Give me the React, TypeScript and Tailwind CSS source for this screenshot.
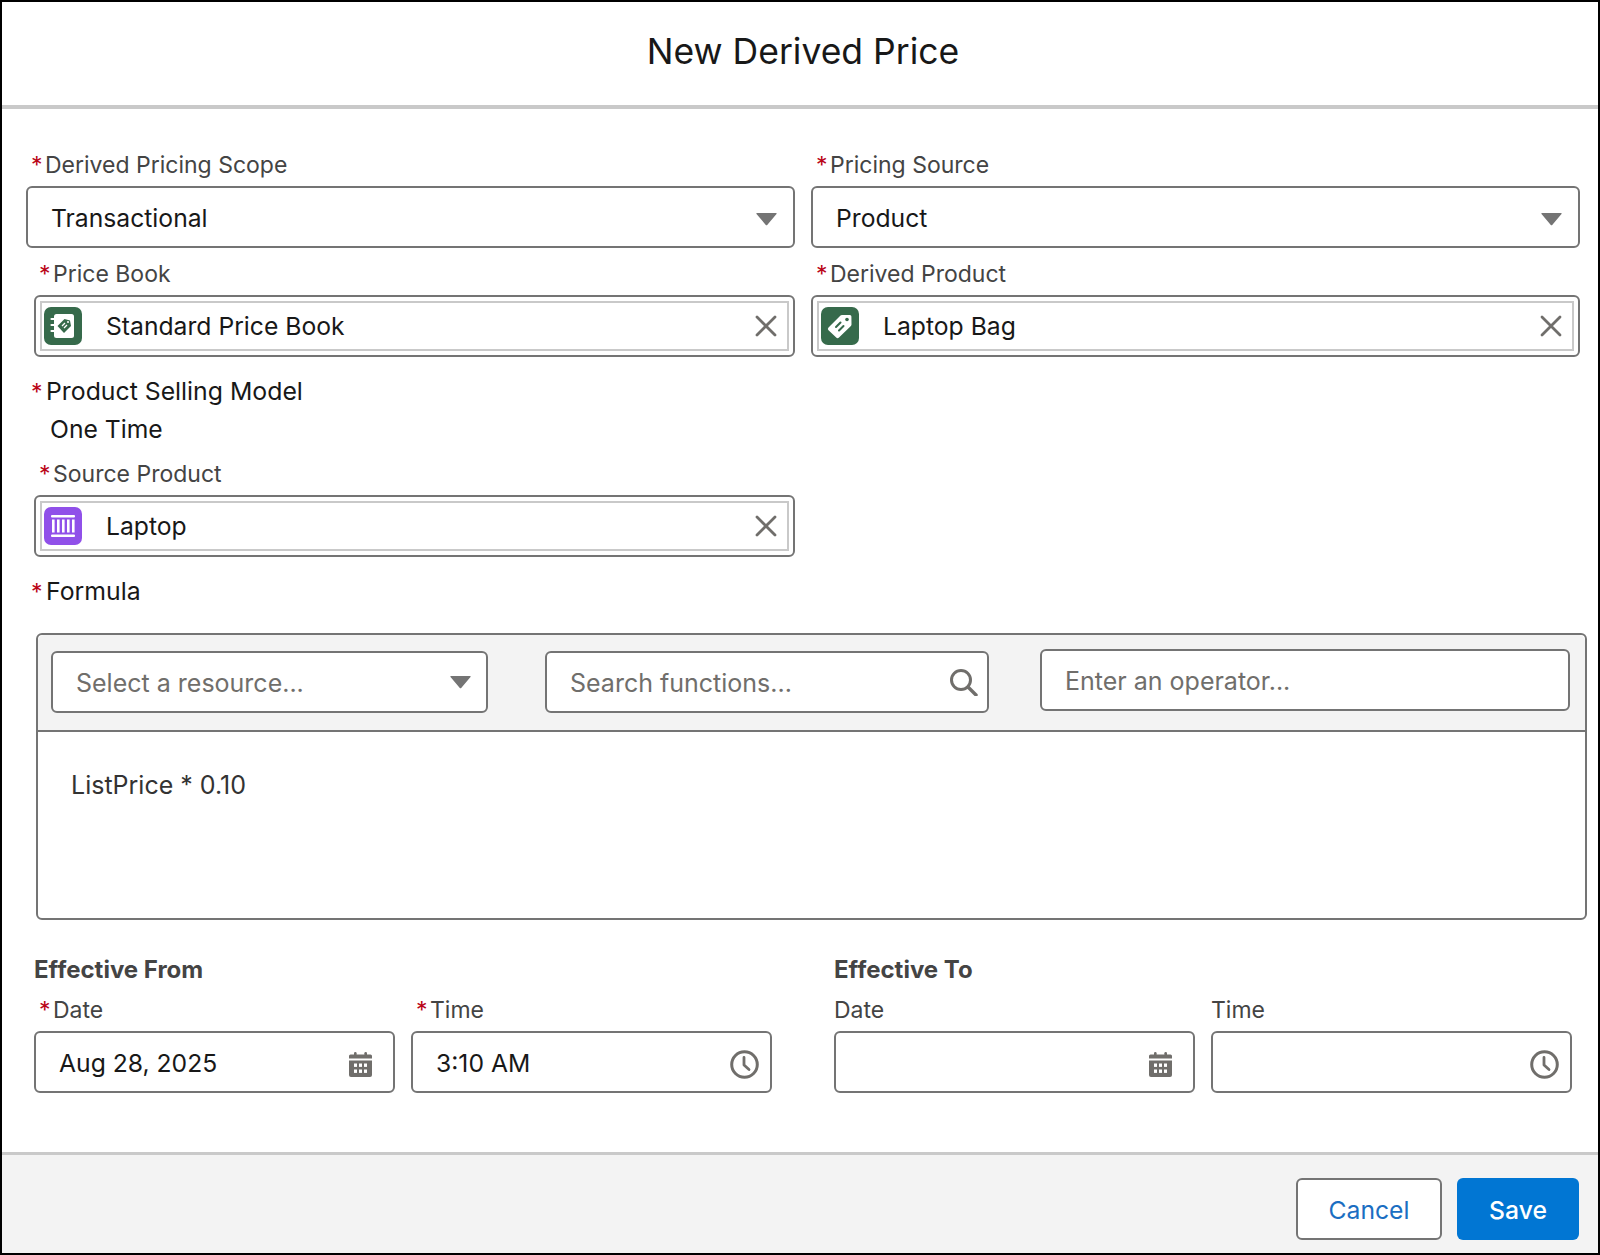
import { ReactNode } from "react";

const Caret = ({ className = "" }: { className?: string }) => (
  <svg width="21" height="14" viewBox="0 0 21 14" className={`shrink-0 ${className}`}>
    <path d="M1 1h19a.6.6 0 0 1 .5 1l-9.3 11a1 1 0 0 1-1.4 0L.5 2A.6.6 0 0 1 1 1z" fill="#747474" />
  </svg>
);

const Close = () => (
  <svg width="22" height="22" viewBox="0 0 22 22" className="shrink-0">
    <path d="M2 2l18 18M20 2L2 20" stroke="#706e6b" strokeWidth="2.8" strokeLinecap="round" />
  </svg>
);

const SearchIcon = () => (
  <svg width="29" height="28" viewBox="0 0 29 28" fill="none" className="shrink-0">
    <circle cx="12" cy="12" r="9.5" stroke="#706e6b" strokeWidth="3" />
    <path d="M19 19l8 8" stroke="#706e6b" strokeWidth="3.4" strokeLinecap="round" />
  </svg>
);

const CalendarIcon = () => (
  <svg width="23" height="25" viewBox="0 0 23 25" className="mr-[10px] shrink-0">
    <rect x="5" y="0" width="2.6" height="5" rx="1.2" fill="#706e6b" />
    <rect x="15.4" y="0" width="2.6" height="5" rx="1.2" fill="#706e6b" />
    <path d="M1.5 2.5h20a1.500 1.500 0 0 1 1.500 1.500v2.500H0V4a1.5 1.5 0 0 1 1.5-1.5z" fill="#706e6b" />
    <path d="M0 8.5h23V23a2 2 0 0 1-2 2H2a2 2 0 0 1-2-2z" fill="#706e6b" />
    {[5, 10, 15].map((x) =>
      [11.5, 17.5].map((y) => <rect key={`${x}-${y}`} x={x} y={y} width="3" height="3.4" fill="#fff" />)
    )}
  </svg>
);

const ClockIcon = () => (
  <svg width="29" height="29" viewBox="0 0 29 29" fill="none" className="shrink-0">
    <circle cx="14.5" cy="14.5" r="12.8" stroke="#706e6b" strokeWidth="3" />
    <path d="M14 7.5v7.5l5 4.5" stroke="#706e6b" strokeWidth="2.8" strokeLinecap="round" strokeLinejoin="round" />
  </svg>
);

const BookGlyph = () => (
  <svg width="38" height="38" viewBox="0 0 38 38">
    <rect width="38" height="38" rx="7" fill="#366a4b" />
    <rect x="10" y="7" width="20" height="24" rx="2.5" fill="#fff" />
    {[12, 18, 24].map((y) => (
      <path key={y} d="M7.500 0h3" transform={`translate(0 ${y})`} stroke="#fff" strokeWidth="2.2" strokeLinecap="round" />
    ))}
    <path d="M13.5 19l7-7 5.5 1.500 1 5.500-7 7z" fill="#366a4b" />
    <circle cx="24" cy="15" r="1" fill="#fff" />
    <path d="M18 19l3-3M20 21l3-3" stroke="#fff" strokeWidth="1.3" />
  </svg>
);

const TagGlyph = () => (
  <svg width="38" height="38" viewBox="0 0 38 38">
    <rect width="38" height="38" rx="7" fill="#366a4b" />
    <path d="M7.500 20.500L19.500 8.500a2 2 0 0 1 1.400-.6l8 .1a1.500 1.500 0 0 1 1.500 1.500l.1 8a2 2 0 0 1-.6 1.400L18 30.500a2 2 0 0 1-2.800 0l-7.700-7.200a2 2 0 0 1 0-2.800z" fill="#fff" />
    <circle cx="26" cy="12.500" r="1.800" fill="#366a4b" />
    <path d="M14.500 18.500l4.500 4.500M18 15.500l4.500 4.500" transform="rotate(90 18.500 19.500)" stroke="#366a4b" strokeWidth="2" strokeLinecap="round" />
  </svg>
);

const ProductGlyph = () => (
  <svg width="38" height="38" viewBox="0 0 38 38">
    <rect width="38" height="38" rx="7" fill="#9050e9" />
    <rect x="7" y="8" width="24" height="2.600" rx="1" fill="#fff" />
    <rect x="7" y="27.400" width="24" height="2.600" rx="1" fill="#fff" />
    {[8, 13, 18, 23, 28].map((x) => (
      <rect key={x} x={x} y="12.500" width="2.600" height="13" fill="#fff" />
    ))}
  </svg>
);

const Label = ({ text, required, className = "" }: { text: string; required?: boolean; className?: string }) => (
  <div className={`flex h-7 items-center text-[23px] text-[#444444] ${className}`}>
    {required && <span className="mr-[3px] w-[11px] text-[#ba0517]">*</span>}
    {text}
  </div>
);

// the two labels that sit directly on the page are a bit larger and darker
const BigLabel = ({ text, className = "" }: { text: string; className?: string }) => (
  <div className={`flex h-7 items-center pl-[5px] text-[24.8px] text-[#181818] ${className}`}>
    <span className="mr-[4px] w-[11px] text-[23px] text-[#ba0517]">*</span>
    {text}
  </div>
);

const Select = ({ value }: { value: string }) => (
  <div className="mt-[7px] flex h-[62px] items-center justify-between rounded-md border-2 border-[#747474] bg-white pr-4 pl-[23px] text-[#181818]">
    <span className="pt-[4px]">{value}</span>
    <Caret className="mt-[4px]" />
  </div>
);

const Lookup = ({ icon, value }: { icon: ReactNode; value: string }) => (
  <div className="mt-[7px] h-[62px] rounded-md border-2 border-[#747474] bg-white p-1">
    <div className="flex h-[50px] items-center border-2 border-[#c9c9c9] pr-[10px] pl-[2px] text-[#181818]">
      {icon}
      <span className="ml-6 flex-1 pt-[2px]">{value}</span>
      <Close />
    </div>
  </div>
);

const DateField = ({ label, required, value, icon }: { label: string; required?: boolean; value?: string; icon: ReactNode }) => (
  <div className="flex-1">
    <Label text={label} required={required} className={required ? "pl-[5px]" : ""} />
    <div className="mt-[7px] flex h-[62px] items-center justify-between rounded-md border-2 border-[#747474] bg-white pr-[11px] pl-[23px] text-[#181818]">
      <span className="pt-[3px]">{value}</span>
      <span className="mt-1 flex">{icon}</span>
    </div>
  </div>
);

const EffectiveGroup = ({ title, required, date, time, className }: { title: string; required?: boolean; date?: string; time?: string; className: string }) => (
  <div className={className}>
    <div className="flex h-7 items-center text-[24px] font-bold text-[#444444]">{title}</div>
    <div className="mt-[12px] flex gap-[16px]">
      <DateField label="Date" required={required} value={date} icon={<CalendarIcon />} />
      <DateField label="Time" required={required} value={time} icon={<ClockIcon />} />
    </div>
  </div>
);

export default function App() {
  return (
    <div className="flex h-[1255px] w-[1600px] flex-col border-2 border-black bg-white font-['Inter',sans-serif] text-[24.7px]">
      <header className="flex h-[107px] shrink-0 items-center justify-center border-b-4 border-[#c9c9c9] pb-[4px] pl-[6px] text-[35.5px] text-[#181818]">
        New Derived Price
      </header>

      <main className="flex-1 pl-[24px]">
        <div className="mt-[42px] grid grid-cols-[769px_769px] gap-x-[16px]">
          <div>
            <Label text="Derived Pricing Scope" required className="pl-[5px]" />
            <Select value="Transactional" />
          </div>
          <div>
            <Label text="Pricing Source" required className="pl-[5px]" />
            <Select value="Product" />
          </div>
          <div className="mt-[12px] pl-[8px]">
            <Label text="Price Book" required className="pl-[5px]" />
            <Lookup icon={<BookGlyph />} value="Standard Price Book" />
          </div>
          <div className="mt-[12px]">
            <Label text="Derived Product" required className="pl-[5px]" />
            <Lookup icon={<TagGlyph />} value="Laptop Bag" />
          </div>
        </div>

        <BigLabel text="Product Selling Model" className="mt-[21px]" />
        <div className="mt-[9px] h-7 pl-[24px] leading-7 text-[#181818]">One Time</div>

        <div className="mt-[17px] w-[769px] pl-[8px]">
          <Label text="Source Product" required className="pl-[5px]" />
          <Lookup icon={<ProductGlyph />} value="Laptop" />
        </div>

        <BigLabel text="Formula" className="mt-[21px]" />

        <section className="mt-[27px] ml-[10px] h-[287px] w-[1551px] rounded-md border-2 border-[#747474] bg-white text-[25px]">
          <div className="flex h-[97px] items-start rounded-t-md border-b-2 border-[#747474] bg-[#f3f3f3] pl-[13px] text-[#706e6b]">
            <div className="mt-[16px] flex h-[62px] w-[437px] items-center justify-between rounded-md border-2 border-[#747474] bg-white pr-[15px] pl-[23px]">
              <span className="pt-[4px]">Select a resource...</span>
              <Caret />
            </div>
            <div className="mt-[16px] ml-[57px] flex h-[62px] w-[444px] items-center justify-between rounded-md border-2 border-[#747474] bg-white pr-[9px] pl-[23px]">
              <span className="pt-[4px]">Search functions...</span>
              <SearchIcon />
            </div>
            <div className="mt-[14px] ml-[51px] flex h-[62px] w-[530px] items-center rounded-md border-2 border-[#747474] bg-white pl-[23px]">
              <span className="pt-[4px]">Enter an operator...</span>
            </div>
          </div>
          <div className="pt-[35px] pl-[33px] text-[#333333]">ListPrice * 0.10</div>
        </section>

        <div className="mt-[36px] flex">
          <EffectiveGroup title="Effective From" required date="Aug 28, 2025" time="3:10 AM" className="ml-[8px] w-[738px]" />
          <EffectiveGroup title="Effective To" className="ml-[62px] w-[738px]" />
        </div>
      </main>

      <footer className="flex h-[101px] shrink-0 items-start justify-end gap-[15px] border-t-[3px] border-[#c9c9c9] bg-[#f3f3f3] pt-[23px] pr-[19px]">
        <button className="h-[62px] w-[146px] rounded-md border-2 border-[#747474] bg-white pt-[4px] text-[#1b6ec2]">Cancel</button>
        <button className="h-[62px] w-[122px] rounded-md bg-[#0176d3] pt-[4px] font-medium text-white">Save</button>
      </footer>
    </div>
  );
}
